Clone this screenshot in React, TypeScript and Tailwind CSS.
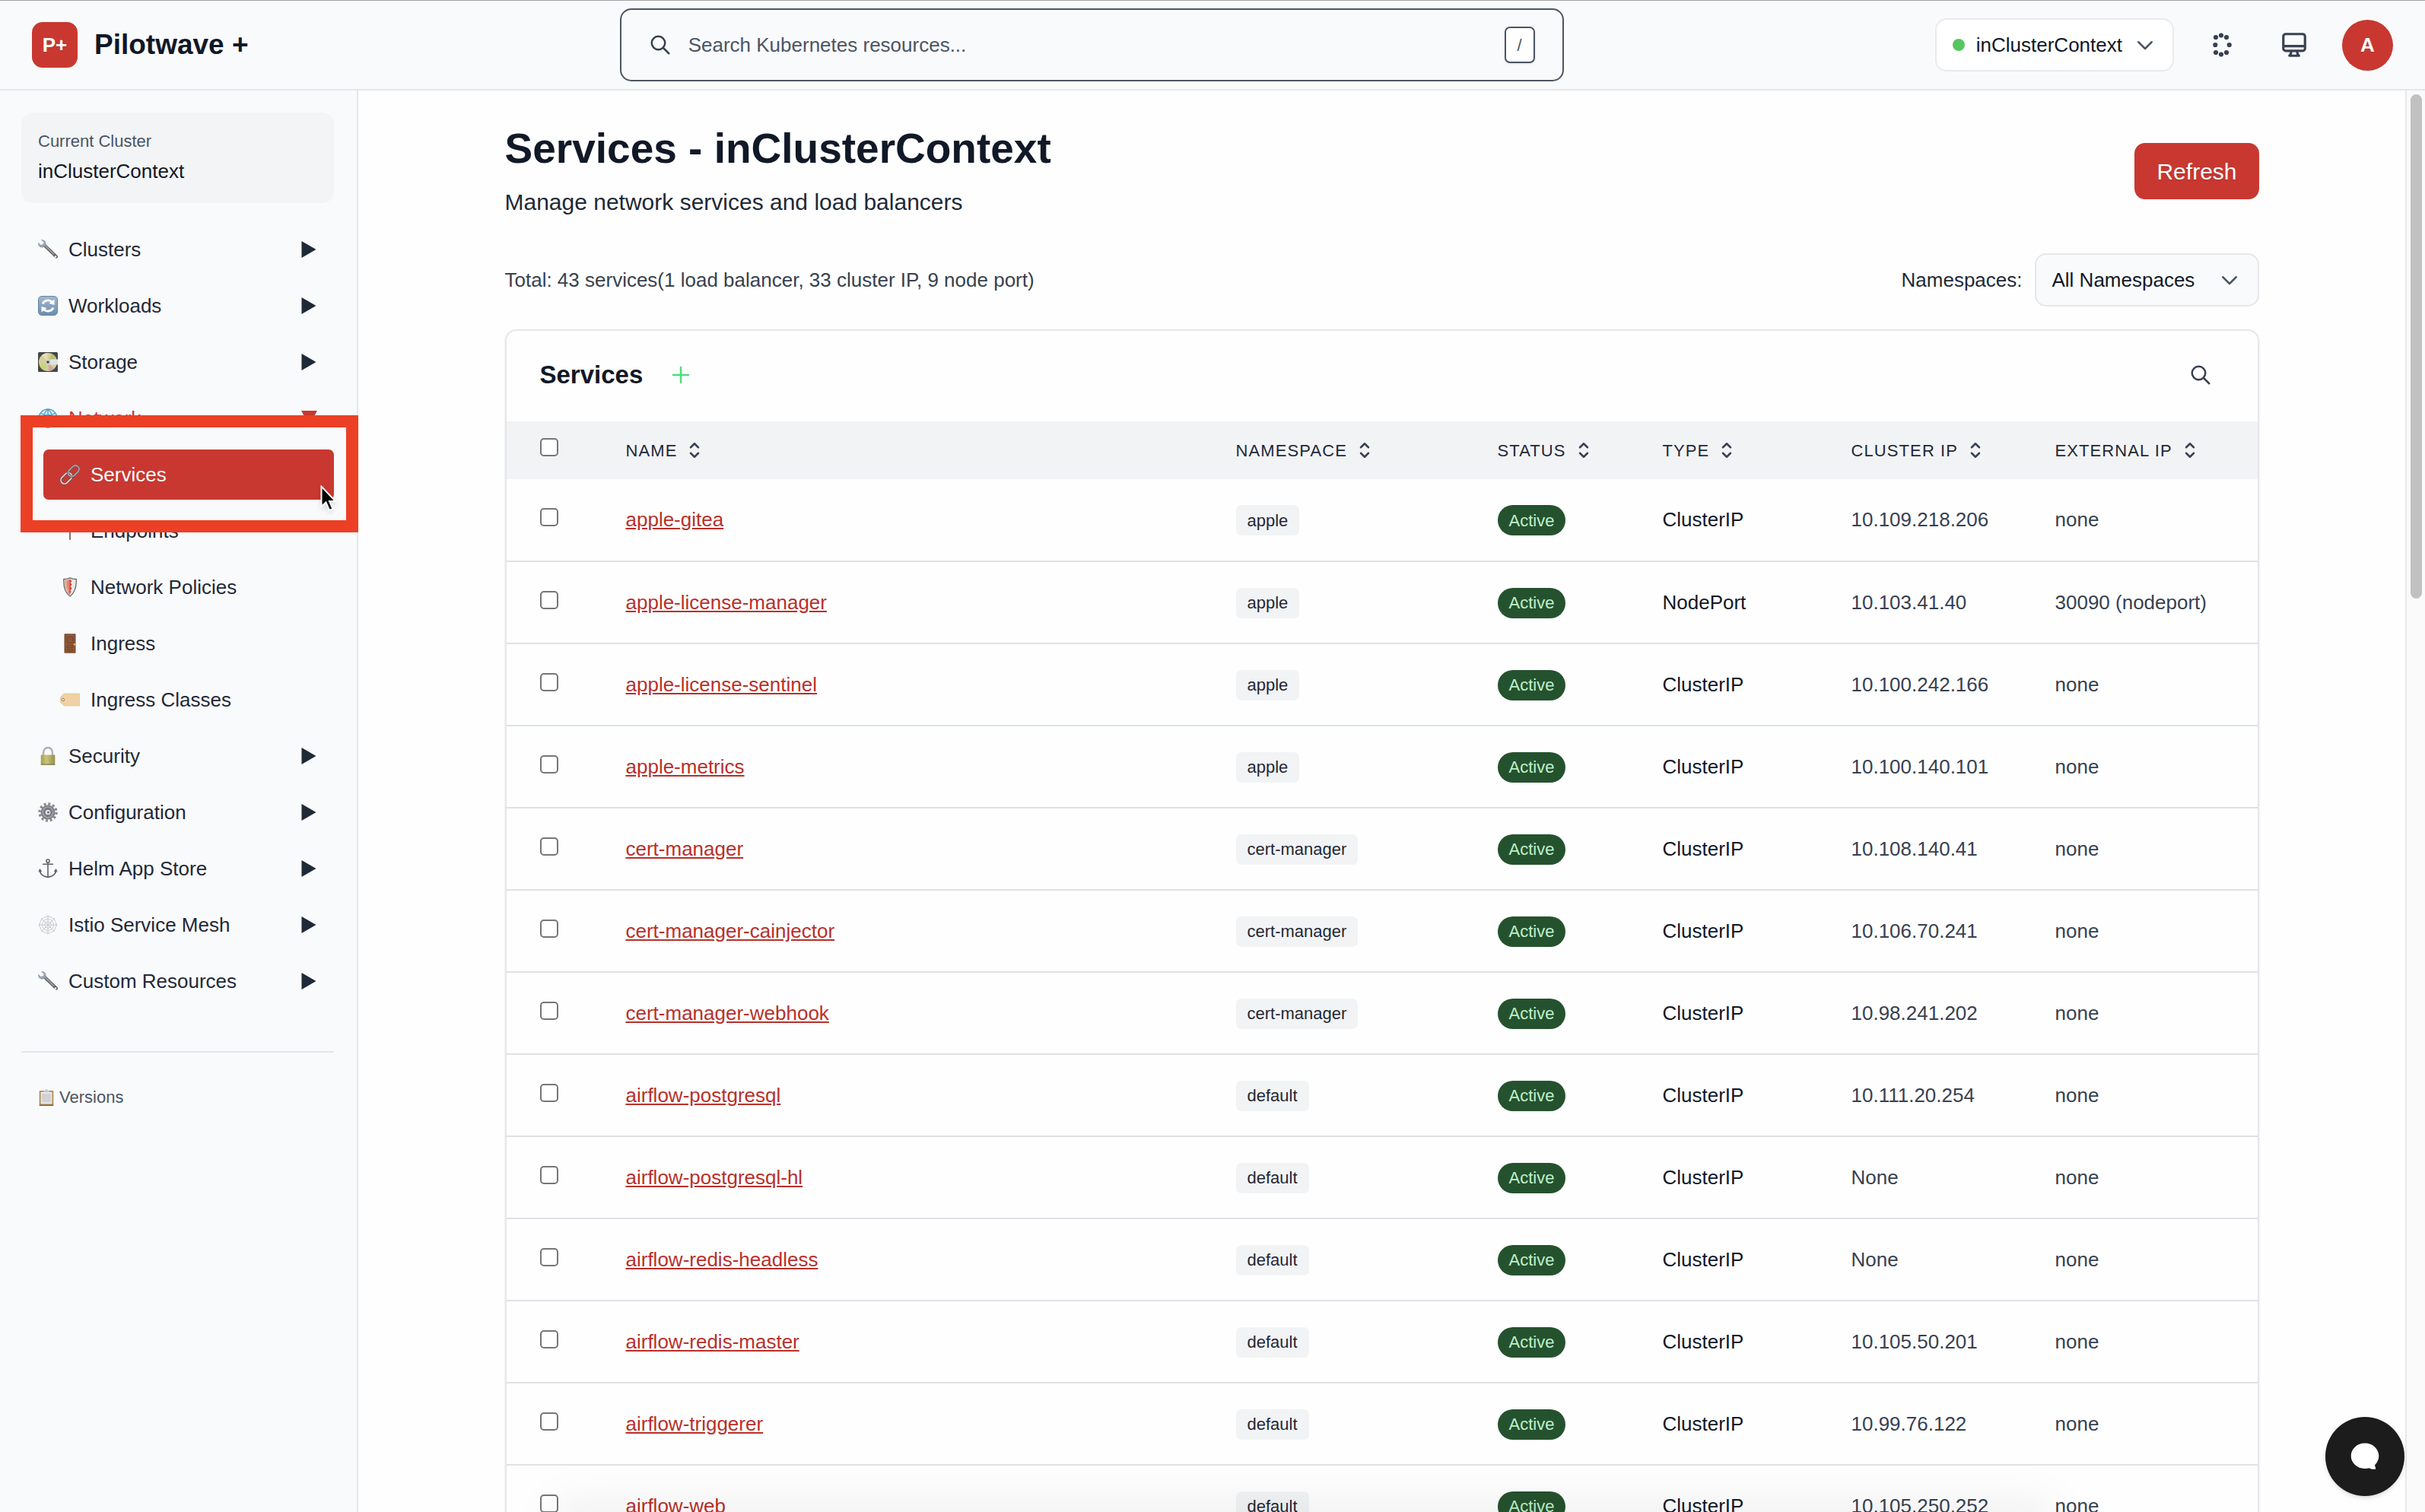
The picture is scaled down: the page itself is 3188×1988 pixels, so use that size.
import React from "react";

type IconProps = { d: string; className?: string };

const paths = {
  search: "M21 21l-6-6m2-5a7 7 0 11-14 0 7 7 0 0114 0z",
  chevron: "M19 9l-7 7-7-7",
  plus: "M12 4v16m8-8H4",
  sort: "M8 9l4-4 4 4m0 6l-4 4-4-4",
  desktop:
    "M9.75 17L9 20l-1 1h8l-1-1-.75-3M3 13h18M5 17h14a2 2 0 002-2V5a2 2 0 00-2-2H5a2 2 0 00-2 2v10a2 2 0 002 2z",
};

function Icon({ d, className = "size-[30px]" }: IconProps) {
  return (
    <svg
      viewBox="0 0 24 24"
      fill="none"
      stroke="currentColor"
      strokeWidth={2}
      strokeLinecap="round"
      strokeLinejoin="round"
      aria-hidden="true"
      className={`${className} shrink-0`}
    >
      <path d={d} />
    </svg>
  );
}

function Glyph({ children, small }: { children: React.ReactNode; small?: boolean }) {
  return (
    <svg viewBox="0 0 26 26" aria-hidden="true" className={small ? "size-[22px] shrink-0" : "size-[26px] shrink-0"}>
      {children}
    </svg>
  );
}

const Wrench = () => (
  <Glyph>
    <path d="M9 8L24 22.500" stroke="#6b6468" strokeWidth="4.200" strokeLinecap="round" />
    <path d="M9 7.500L21 19.500" stroke="#a3a3aa" strokeWidth="1.600" />
    <path d="M4.500 .5L8 3.500 7 6.500 3.500 7.200.4 4.200C0 8 2.600 10.800 7 10l3-2.600C11 3 8.500.2 4.500.5z" fill="#9aa7b3" stroke="#7c8994" strokeWidth=".5" />
    <circle cx="23" cy="22.500" r="1.300" fill="#f3f4f6" />
  </Glyph>
);

const Cycle = () => (
  <Glyph>
    <defs>
      <linearGradient id="cycle" x1="0" y1="0" x2="0" y2="1">
        <stop offset="0" stopColor="#a3b9ce" />
        <stop offset="1" stopColor="#6c8cb0" />
      </linearGradient>
    </defs>
    <rect x=".5" y=".5" width="25" height="25" rx="4.500" fill="url(#cycle)" stroke="#6683a3" />
    <path d="M6 10.500C8 5.500 14.500 4.500 18.500 8M20 15.500C18 20.500 11.500 21.500 7.500 18" fill="none" stroke="#fff" strokeWidth="2.800" />
    <path d="M21.500 4.500V12L14.500 10zM4.500 21.500V14l7 2z" fill="#fff" />
  </Glyph>
);

const Disc = () => (
  <Glyph>
    <rect width="26" height="26" rx="1.500" fill="#44474a" />
    <circle cx="13" cy="13" r="12" fill="#d5cf98" />
    <path d="M13 13L5 4A12 12 0 0 1 12 1z" fill="#e9dcb4" />
    <path d="M13 13L18 2A12 12 0 0 1 24 8z" fill="#b5bf78" />
    <path d="M13 13L2 18A12 12 0 0 0 8 24z" fill="#c7d27b" />
    <path d="M13 13L14 25A12 12 0 0 0 21 22z" fill="#cfa99c" />
    <path d="M13 9.500h13v7H13a3.500 3.500 0 0 1 0-7z" fill="#dfe2e4" />
    <circle cx="13" cy="13" r="3.400" fill="#c8cbbf" />
    <circle cx="13" cy="13" r="1.600" fill="#2f3133" />
  </Glyph>
);

const Globe = () => (
  <Glyph>
    <circle cx="13" cy="13" r="12" fill="#d6eaf5" stroke="#5b9fc0" strokeWidth="1.500" />
    <path
      d="M13 1v24M1 13h24M3.500 6.500c5 3 14 3 19 0M3.500 19.500c5-3 14-3 19 0M13 1c-7.500 6-7.500 18 0 24M13 1c7.500 6 7.500 18 0 24"
      fill="none"
      stroke="#5b9fc0"
      strokeWidth="1.300"
    />
  </Glyph>
);

const Link = () => (
  <Glyph>
    <g fill="none" transform="rotate(-45 13 13)">
      <rect x="-2" y="8.200" width="16.500" height="9.600" rx="4.800" stroke="#6b5a60" strokeWidth="3" />
      <rect x="-2" y="8.200" width="16.500" height="9.600" rx="4.800" stroke="#e6dde0" strokeWidth="1.500" />
      <rect x="11.500" y="8.200" width="16.500" height="9.600" rx="4.800" stroke="#6b5a60" strokeWidth="3" />
      <rect x="11.500" y="8.200" width="16.500" height="9.600" rx="4.800" stroke="#b9aeb3" strokeWidth="1.300" />
    </g>
  </Glyph>
);

const Pin = () => (
  <Glyph>
    <path d="M13 10v14" stroke="#8b7168" strokeWidth="2" strokeLinecap="round" />
    <circle cx="13" cy="6" r="5.500" fill="#d9382c" />
  </Glyph>
);

const Shield = () => (
  <Glyph>
    <path d="M13 .8c3 1.500 5.500 1.800 8.200 1.700C21.800 13 20 20 13 25 6 20 4.200 13 4.800 2.500 7.500 2.600 10 2.300 13 .8z" fill="#e8e9ea" stroke="#6b6b6b" strokeWidth="1.300" />
    <path d="M13 2.500C10.500 3.800 8.500 4 6.300 4 6 13 8 19 13 23z" fill="#e58573" />
    <path d="M12.500 2.500l3 2.500-2 2 2 2.500-2 2.500 2 2.500-2 2.500 1 2-2 3z" fill="#cf3c28" />
    <path d="M7.800 4.500C7.500 11 8.500 16 10.500 19" fill="none" stroke="#f2b3a5" strokeWidth="1.500" />
  </Glyph>
);

const Door = () => (
  <Glyph>
    <rect x="5.500" y=".3" width="15" height="25.400" fill="#7a4a30" />
    <rect x="7.300" y="2" width="11.400" height="23.700" fill="#96603f" />
    <path d="M9 4h8v8.500H9zM9 15h8v3.500H9zM9 20.500h8v3H9z" fill="#8a5436" stroke="#6d3f27" strokeWidth=".9" />
    <circle cx="19.300" cy="14.200" r="1.500" fill="#e0b04a" />
  </Glyph>
);

const Tag = () => (
  <Glyph>
    <path d="M5 5h20.500v16H5L.5 16.500v-7z" fill="#f0d0a4" stroke="#e6bf8c" strokeWidth=".7" />
    <circle cx="3.800" cy="13" r="1.700" fill="#f9fafb" stroke="#8a7763" strokeWidth="1" />
  </Glyph>
);

const Lock = () => (
  <Glyph>
    <defs>
      <linearGradient id="lock" x1="0" x2="1">
        <stop offset="0" stopColor="#a39f50" />
        <stop offset=".4" stopColor="#c9c47c" />
        <stop offset="1" stopColor="#949047" />
      </linearGradient>
    </defs>
    <path d="M7 13V8.500a6 6.500 0 0 1 12 0V13" fill="none" stroke="#a9b1b8" strokeWidth="2.400" />
    <rect x="3.700" y="11.500" width="18.600" height="13" rx="1" fill="url(#lock)" />
    <path d="M3.700 24.200h18.600" stroke="#6f6c38" />
  </Glyph>
);

const Gear = () => (
  <Glyph>
    <circle cx="13" cy="13" r="11" fill="none" stroke="#85898e" strokeWidth="3.400" strokeDasharray="2.900 2.860" />
    <circle cx="13" cy="13" r="7.300" fill="none" stroke="#7d8186" strokeWidth="4.400" />
    <circle cx="13" cy="13" r="7" fill="none" stroke="#a7abb0" strokeWidth="1.200" />
    <circle cx="13" cy="13" r="4.300" fill="#dfe3e8" stroke="#5b5f66" strokeWidth="1.400" />
    <circle cx="13.500" cy="13" r="1.600" fill="#6d7178" />
  </Glyph>
);

const Anchor = () => (
  <Glyph>
    <g fill="none" stroke="#5f6469" strokeWidth="1.900" strokeLinecap="round">
      <circle cx="13" cy="3" r="2.100" strokeWidth="1.500" />
      <path d="M13 5.500V23M6.500 7.300h13" strokeWidth="1.600" />
      <path d="M2.500 15.500C3 21 8 23.800 13 24.300 18 23.800 23 21 23.500 15.500" />
    </g>
    <path d="M.3 17.500L2.300 13l3 3.800zM25.700 17.500L23.700 13l-3 3.800z" fill="#5f6469" />
  </Glyph>
);

const Web = () => (
  <Glyph>
    <g fill="none" stroke="#c3c5c8" strokeWidth=".9">
      <path d="M13 .5v25M.5 13h25M4.200 4.200l17.600 17.600M21.800 4.200L4.200 21.800" />
      <path d="M13 1.500l8.100 3.400L24.500 13l-3.400 8.100L13 24.500l-8.100-3.400L1.500 13l3.400-8.100z" />
      <path d="M13 5l5.600 2.400L21 13l-2.400 5.600L13 21l-5.600-2.400L5 13l2.400-5.600z" />
      <path d="M13 8.500l3.200 1.300 1.300 3.200-1.300 3.200-3.200 1.300-3.200-1.300L8.500 13l1.300-3.200z" />
    </g>
  </Glyph>
);

const Clipboard = () => (
  <Glyph small>
    <rect x="2" y="2.500" width="22" height="23" rx="1" fill="#b08d5b" />
    <path d="M2 25.200h22" stroke="#6b4a36" strokeWidth="1.300" />
    <rect x="4.200" y="4.500" width="17.600" height="18.500" fill="#e9e9e9" />
    <rect x="6" y="7" width="14" height="13.500" fill="#d2d2d2" />
    <path d="M7 4.500L10.500 2a2.600 2.600 0 0 1 5 0L19 4.500z" fill="#c9cccf" />
  </Glyph>
);

type NavEntry = {
  label: string;
  icon: React.ReactNode;
  open?: boolean;
  children?: { label: string; icon: React.ReactNode; active?: boolean }[];
};

const nav: NavEntry[] = [
  { label: "Clusters", icon: <Wrench /> },
  { label: "Workloads", icon: <Cycle /> },
  { label: "Storage", icon: <Disc /> },
  {
    label: "Network",
    icon: <Globe />,
    open: true,
    children: [
      { label: "Services", icon: <Link />, active: true },
      { label: "Endpoints", icon: <Pin /> },
      { label: "Network Policies", icon: <Shield /> },
      { label: "Ingress", icon: <Door /> },
      { label: "Ingress Classes", icon: <Tag /> },
    ],
  },
  { label: "Security", icon: <Lock /> },
  { label: "Configuration", icon: <Gear /> },
  { label: "Helm App Store", icon: <Anchor /> },
  { label: "Istio Service Mesh", icon: <Web /> },
  { label: "Custom Resources", icon: <Wrench /> },
];

const services = [
  ["apple-gitea", "apple", "ClusterIP", "10.109.218.206", "none"],
  ["apple-license-manager", "apple", "NodePort", "10.103.41.40", "30090 (nodeport)"],
  ["apple-license-sentinel", "apple", "ClusterIP", "10.100.242.166", "none"],
  ["apple-metrics", "apple", "ClusterIP", "10.100.140.101", "none"],
  ["cert-manager", "cert-manager", "ClusterIP", "10.108.140.41", "none"],
  ["cert-manager-cainjector", "cert-manager", "ClusterIP", "10.106.70.241", "none"],
  ["cert-manager-webhook", "cert-manager", "ClusterIP", "10.98.241.202", "none"],
  ["airflow-postgresql", "default", "ClusterIP", "10.111.20.254", "none"],
  ["airflow-postgresql-hl", "default", "ClusterIP", "None", "none"],
  ["airflow-redis-headless", "default", "ClusterIP", "None", "none"],
  ["airflow-redis-master", "default", "ClusterIP", "10.105.50.201", "none"],
  ["airflow-triggerer", "default", "ClusterIP", "10.99.76.122", "none"],
  ["airflow-web", "default", "ClusterIP", "10.105.250.252", "none"],
];

const columns = ["Name", "Namespace", "Status", "Type", "Cluster IP", "External IP"];

function Header() {
  return (
    <header className="flex h-[119px] shrink-0 items-center justify-between border-t border-b-2 border-t-[#a3a3a5] border-b-[#e5e7eb] bg-[#f9fafc] px-[42px]">
      <div className="flex items-center gap-[22px]">
        <div className="flex size-[60px] items-center justify-center rounded-[14px] bg-[#c83830] text-[26px] font-bold text-white text-shadow-2xs">
          P+
        </div>
        <span className="text-[37px] font-bold text-[#111827]">Pilotwave +</span>
      </div>

      <label className="flex h-24 w-[1241px] items-center gap-[22px] rounded-[15px] border-2 border-[#4b5563] pr-9 pl-9 text-[#374151]">
        <Icon d={paths.search} />
        <input
          type="text"
          aria-label="Search Kubernetes resources"
          placeholder="Search Kubernetes resources..."
          className="min-w-0 flex-1 bg-transparent text-[26px] outline-none placeholder:text-[#4b5563]"
        />
        <kbd className="flex h-12 w-10 items-center justify-center rounded-[7px] border-2 border-[#4b5563] bg-white font-['Liberation_Sans',Arial,sans-serif] text-[22px] text-[#4b5563] shadow-sm">
          /
        </kbd>
      </label>

      <div className="flex items-center">
        <button
          type="button"
          className="flex h-[70px] items-center gap-[15px] rounded-[15px] border-2 border-[#e9eaed] bg-white pr-[21px] pl-[21px] text-[26px] text-[#111827]"
        >
          <span className="size-4 rounded-full bg-[#58c660]" />
          inClusterContext
          <span className="text-[#4b5563]">
            <Icon d={paths.chevron} />
          </span>
        </button>
        <button type="button" aria-label="Activity" className="ml-[43px] flex size-10 items-center justify-center text-[#374151]">
          <svg viewBox="0 0 40 40" fill="currentColor" aria-hidden="true" className="size-10">
            <circle cx="19" cy="7.500" r="3.100" />
            <circle cx="12" cy="10" r="3.100" />
            <circle cx="26" cy="10" r="3.100" />
            <circle cx="11.300" cy="20" r="3.100" />
            <circle cx="29.700" cy="20" r="3.100" />
            <circle cx="12" cy="30" r="3.100" />
            <circle cx="26" cy="30" r="3.100" />
            <circle cx="19" cy="32.500" r="3.100" />
          </svg>
        </button>
        <button type="button" aria-label="Theme" className="ml-14 text-[#374151]">
          <Icon d={paths.desktop} className="size-[38px]" />
        </button>
        <button
          type="button"
          aria-label="Account"
          className="ml-11 size-[67px] rounded-full bg-[#c83830] text-[26px] font-bold text-white text-shadow-2xs"
        >
          A
        </button>
      </div>
    </header>
  );
}

function Sidebar() {
  return (
    <aside className="relative w-[471px] shrink-0 border-r-2 border-[#e5e7eb] bg-[#f9fafc] pt-[29px] pr-[30px] pl-7">
      <div className="flex h-[119px] flex-col justify-center rounded-[15px] bg-[#f2f4f5] px-[22px]">
        <div className="text-[22px] leading-[34px] text-[#4b5563]">Current Cluster</div>
        <div className="text-[26px] leading-[44px] text-[#111827]">inClusterContext</div>
      </div>

      <nav className="mt-7">
        <ul className="flex flex-col gap-2 text-[26px] text-[#1f2937]">
          {nav.map((entry) => (
            <li key={entry.label}>
              <button
                type="button"
                aria-expanded={!!entry.open}
                className={
                  entry.open
                    ? "flex h-[66px] w-full items-center gap-[14px] px-[22px] text-[#c83830]"
                    : "flex h-[66px] w-full items-center gap-[14px] px-[22px]"
                }
              >
                {entry.icon}
                <span className="flex-1 text-left">{entry.label}</span>
                <svg viewBox="0 0 22 22" fill="currentColor" aria-hidden="true" className="size-[22px]">
                  {entry.open ? <path d="M1 1h21L11.500 20z" /> : <path d="M1.500 0v22l19-11z" />}
                </svg>
              </button>
              {entry.children && (
                <ul className="mt-2 flex flex-col gap-2 pl-[29px]">
                  {entry.children.map((child) => (
                    <li key={child.label}>
                      <a
                        href="#"
                        className={
                          child.active
                            ? "flex h-[66px] items-center gap-[14px] rounded-[7px] bg-[#c83830] px-[22px] text-white text-shadow-2xs"
                            : "flex h-[66px] items-center gap-[14px] px-[22px]"
                        }
                      >
                        {child.icon}
                        {child.label}
                      </a>
                    </li>
                  ))}
                </ul>
              )}
            </li>
          ))}
        </ul>
      </nav>

      <div className="mt-[59px] border-t-2 border-[#e5e7eb] pt-[42px] pl-[22px]">
        <a href="#" className="flex items-center gap-1.5 text-[22px] leading-[34px] text-[#4b5563]">
          <Clipboard />
          Versions
        </a>
      </div>

      <div className="pointer-events-none absolute top-[427px] -right-[2px] left-[27px] h-[154px] border-[16px] border-[#eb4025]" />
      <svg viewBox="0 0 22 36" aria-hidden="true" className="absolute top-[519px] left-[421px] h-9 w-[22px] drop-shadow-md">
        <path d="M1.500 1.500v26.500l6-5.500 4.500 10.500 4.500-2-4.500-10h8z" fill="#000" stroke="#fff" strokeWidth="2" />
      </svg>
    </aside>
  );
}

function Checkbox({ label }: { label: string }) {
  return (
    <input
      type="checkbox"
      aria-label={label}
      className="inline-block size-6 appearance-none rounded-[5px] border-2 border-[#767676] bg-white align-baseline"
    />
  );
}

function ServicesTable() {
  return (
    <table className="w-full table-fixed text-left text-[26px]">
      <colgroup>
        <col className="w-[113px]" />
        <col />
        <col className="w-[344px]" />
        <col className="w-[217px]" />
        <col className="w-[248px]" />
        <col className="w-[268px]" />
        <col className="w-[310px]" />
      </colgroup>
      <thead>
        <tr className="h-[76px] bg-[#f2f3f5] text-[22px] text-[#1f2937]">
          <th scope="col" className="pl-11 font-normal">
            <Checkbox label="Select all services" />
          </th>
          {columns.map((column) => (
            <th key={column} scope="col" aria-label={column} className="pl-11 font-normal">
              <button type="button" className="flex items-center gap-2 tracking-wider whitespace-nowrap uppercase">
                {column}
                <span className="text-[#374151]">
                  <Icon d={paths.sort} />
                </span>
              </button>
            </th>
          ))}
        </tr>
      </thead>
      <tbody>
        {services.map(([name, namespace, type, clusterIp, externalIp]) => (
          <tr key={name} className="h-[108px] border-b-2 border-[#dfe1e5] whitespace-nowrap">
            <td className="pl-11">
              <Checkbox label={`Select ${name}`} />
            </td>
            <td className="pl-11">
              <a href="#" className="text-[#b8302a] underline">
                {name}
              </a>
            </td>
            <td className="pl-11">
              <span className="inline-flex h-10 items-center rounded-[7px] bg-[#f2f3f5] px-[15px] align-middle text-[22px] text-[#1f2937]">
                {namespace}
              </span>
            </td>
            <td className="pl-11">
              <span className="inline-flex h-10 items-center rounded-full bg-[#25522e] px-[15px] align-middle text-[22px] text-[#bff0cb]">
                Active
              </span>
            </td>
            <td className="pl-11 text-[#111827]">{type}</td>
            <td className="pl-11 text-[#374151]">{clusterIp}</td>
            <td className="pl-11 text-[#374151]">{externalIp}</td>
          </tr>
        ))}
      </tbody>
    </table>
  );
}

export default function App() {
  return (
    <div className="relative flex h-screen flex-col overflow-hidden bg-[#fefefe] font-['Liberation_Sans',Arial,sans-serif] text-[#111827]">
      <Header />
      <div className="flex min-h-0 flex-1">
        <Sidebar />
        <main className="min-w-0 flex-1 overflow-hidden px-[59px] pt-[43px]">
          <div className="mx-auto max-w-[2306px]">
            <div className="flex items-center justify-between">
              <div>
                <h1 className="text-[55px] leading-[66px] font-bold text-[#111827]">Services - inClusterContext</h1>
                <p className="mt-4 text-[30px] leading-[44px] text-[#1f2937]">Manage network services and load balancers</p>
              </div>
              <button type="button" className="h-[74px] rounded-[14px] bg-[#c83830] px-[29px] text-[30px] text-white text-shadow-xs">
                Refresh
              </button>
            </div>

            <div className="mt-[45px] flex items-center justify-between text-[26px]">
              <p className="text-[#374151]">Total: 43 services(1 load balancer, 33 cluster IP, 9 node port)</p>
              <div className="flex items-center gap-4">
                <label htmlFor="namespaces" className="text-[#1f2937]">
                  Namespaces:
                </label>
                <div className="relative">
                  <select
                    id="namespaces"
                    className="h-[70px] w-[295px] appearance-none rounded-[15px] border-2 border-[#e5e7eb] bg-[#f9fafc] pl-[21px] text-[#111827]"
                  >
                    <option>All Namespaces</option>
                  </select>
                  <span className="pointer-events-none absolute top-5 right-6 text-[#4b5563]">
                    <Icon d={paths.chevron} />
                  </span>
                </div>
              </div>
            </div>

            <section className="mt-[30px] overflow-hidden rounded-[15px] border-2 border-[#e5e7eb] shadow-sm">
              <div className="flex h-[119px] items-center px-11 pb-[3px]">
                <h2 className="text-[33px] font-bold">Services</h2>
                <button type="button" aria-label="Add service" className="ml-[35px] text-[#4ade80]">
                  <Icon d={paths.plus} />
                </button>
                <button type="button" aria-label="Search services" className="mr-4 ml-auto text-[#374151]">
                  <Icon d={paths.search} />
                </button>
              </div>
              <ServicesTable />
            </section>
          </div>
        </main>
        <div className="w-[26px] shrink-0 border-l-2 border-[#e8e8e8] bg-[#fafafa] pt-[5px]">
          <div className="mx-auto h-[663px] w-[15px] rounded-full bg-[#c1c1c1]" />
        </div>
      </div>

      <div className="pointer-events-none absolute right-[500px] bottom-0 left-[740px] h-0 shadow-[0_10px_60px_10px_rgba(0,0,0,0.15)]" />
      <button
        type="button"
        aria-label="Open chat"
        className="absolute right-[27px] bottom-[21px] flex size-[104px] items-center justify-center rounded-full bg-[#1c1c1c] text-white shadow-md"
      >
        <svg viewBox="0 0 38 36" fill="currentColor" aria-hidden="true" className="h-9 w-[38px]">
          <path d="M19 .5C29.200.5 37.300 8 37.300 17.300c0 4.700-2 8.900-5.300 12l1.300 5.200c-3.200.6-5.800.3-8.600-1.300-1.800.5-3.700.8-5.700.8C8.800 34 .7 26.600.7 17.300S8.800.5 19 .5z" />
        </svg>
      </button>
    </div>
  );
}
